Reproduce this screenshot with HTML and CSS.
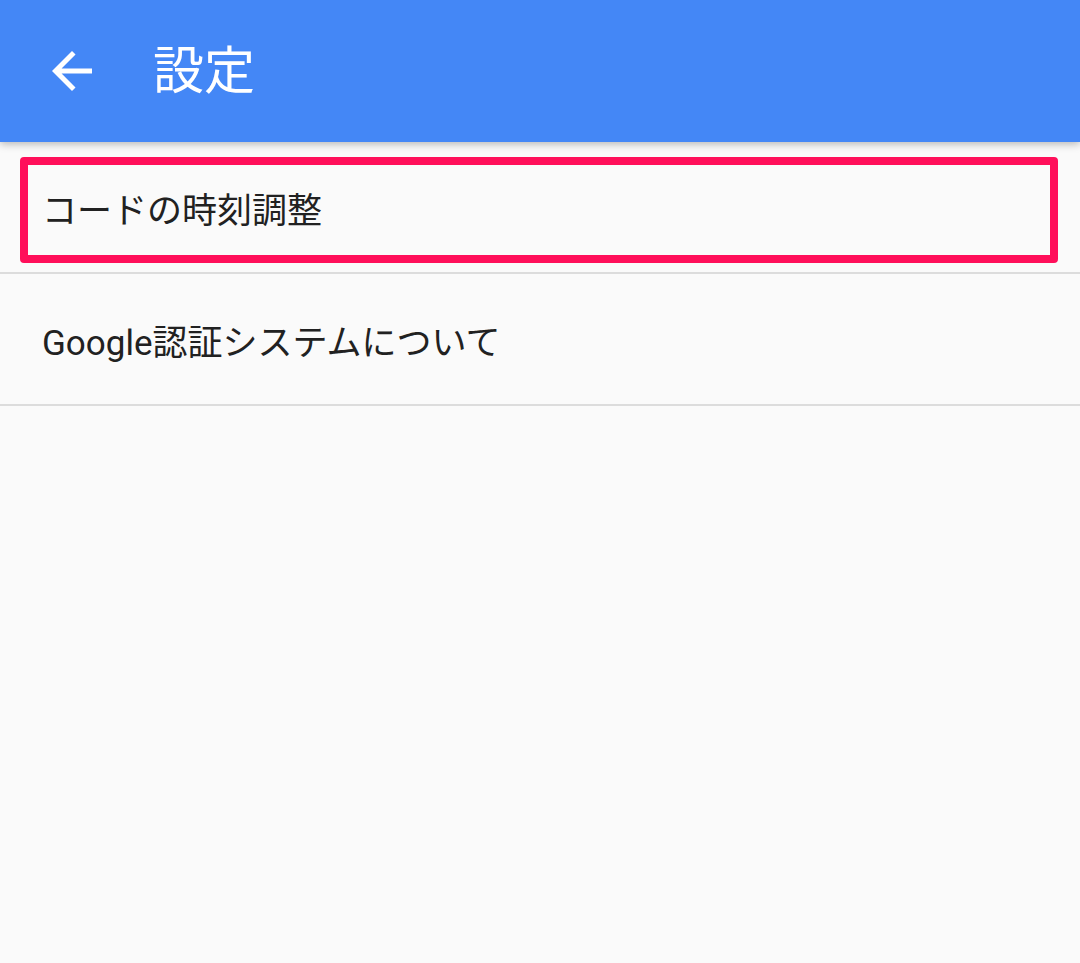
FILE: index.html
```html
<!DOCTYPE html>
<html lang="ja">
<head>
<meta charset="utf-8">
<link rel="stylesheet" href="styles.css">
</head>
<body>
<header class="appbar">
  <span class="back">
    <svg viewBox="0 0 24 24" width="60" height="60"><path fill="#fff" d="M20 11H7.830l5.59-5.59L12 4l-8 8 8 8 1.41-1.41L7.830 13H20v-2z"/></svg>
  </span>
  <h1 class="title">設定</h1>
</header>
<main class="list">
  <div class="row">
    <span class="label">コードの時刻調整</span>
    <span class="highlight"></span>
  </div>
  <div class="row">
    <span class="label">Google認証システムについて</span>
  </div>
</main>
</body>
</html>
```
FILE: styles.css
```css
html, body {
  margin: 0;
  padding: 0;
  background: #fafafa;
  width: 1080px;
  height: 963px;
  overflow: hidden;
  font-family: Roboto, "Noto Sans CJK JP", sans-serif;
}
.appbar {
  height: 142px;
  background: #4487f6;
  display: flex;
  align-items: center;
  box-shadow: 0 2px 8px rgba(0,0,0,0.28);
  position: relative;
  z-index: 1;
}
.back {
  display: flex;
  margin-left: 42px;
}
.title {
  margin: 0 0 0 51px;
  color: #fff;
  font-size: 51px;
  font-weight: 400;
  line-height: 1;
}
.list {
  display: flex;
  flex-direction: column;
}
.row {
  position: relative;
  height: 130px;
  border-bottom: 2px solid #dcdcdc;
  display: flex;
  align-items: center;
  padding-left: 42px;
}
.label {
  font-size: 35px;
  color: #212121;
}
.highlight {
  position: absolute;
  left: 20px;
  right: 22px;
  top: 15px;
  bottom: 9px;
  border: 8px solid #ff0f5a;
  border-radius: 4px;
}
```
